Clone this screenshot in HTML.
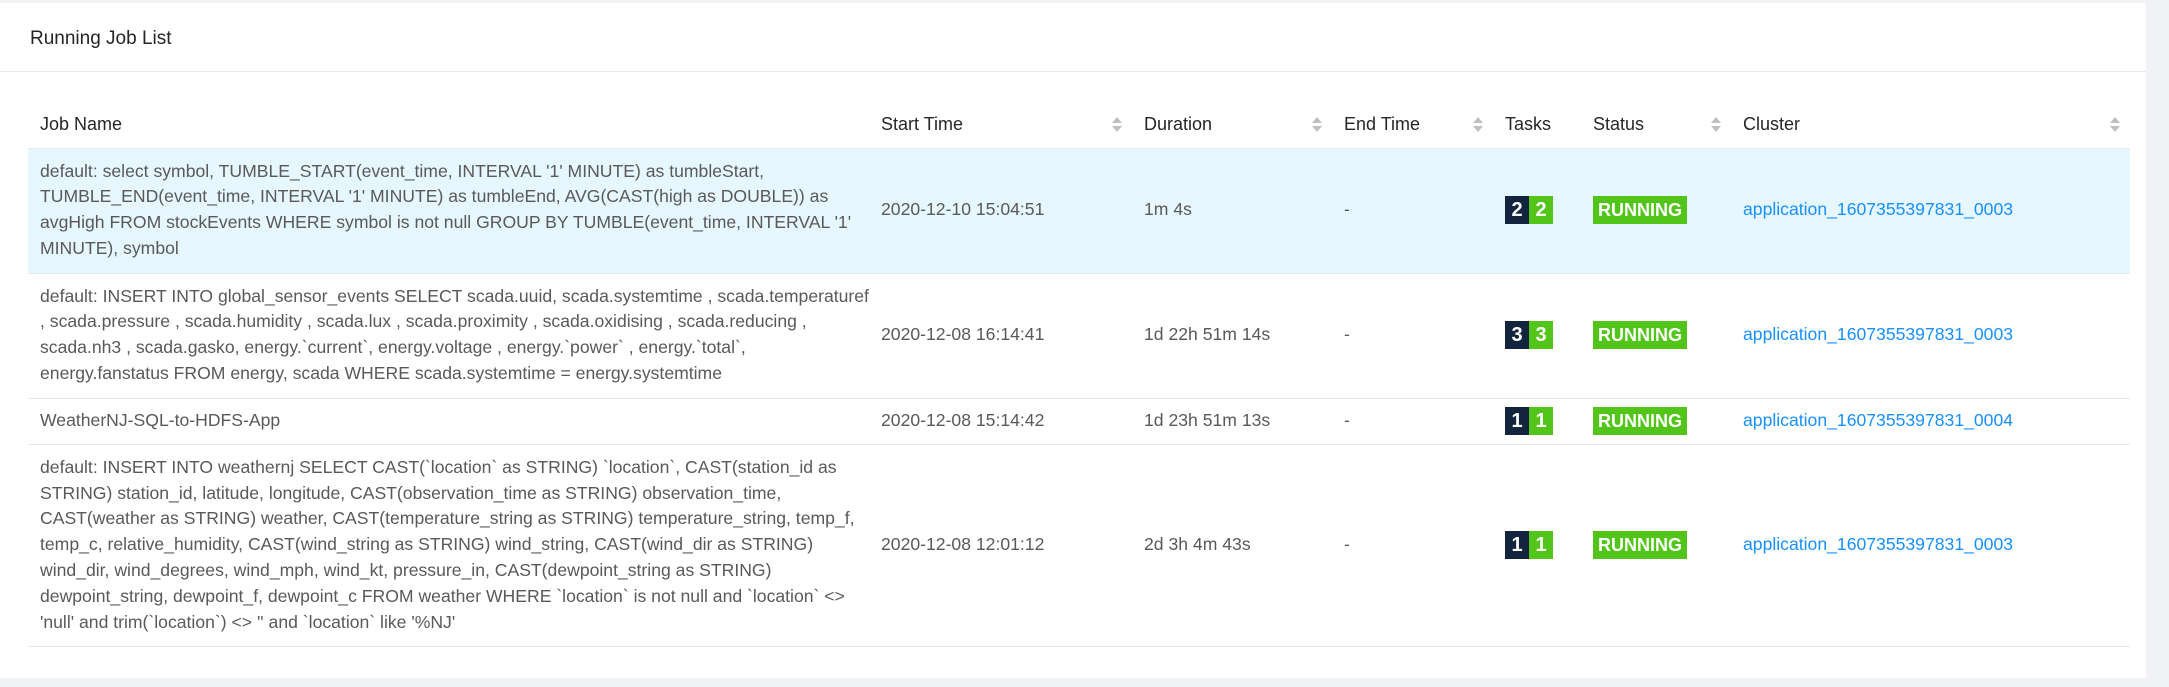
<!DOCTYPE html>
<html><head><meta charset="utf-8"><style>
*{box-sizing:border-box;margin:0;padding:0}
body{width:2169px;height:687px;background:#f0f2f5;font-family:"Liberation Sans",Arial,sans-serif;overflow:hidden;position:relative}
.card{position:absolute;left:0;top:3px;width:2146px;height:675px;background:#fff}
.title{height:69px;border-bottom:1px solid #e8e8e8;padding-left:30px;line-height:72px;font-size:19px;color:#262626}
table{position:absolute;left:28px;top:97px;width:2102px;border-collapse:collapse;table-layout:fixed;font-size:17.6px;color:#595959}
th{text-align:left;font-weight:normal;color:#262626;height:48px;padding:2px 12px 0;border-bottom:1px solid #e8e8e8;position:relative;white-space:nowrap;font-size:18px}
td{padding:10px 12px 11px;line-height:25.8px;border-bottom:1px solid #e8e8e8;vertical-align:middle;white-space:nowrap}
tr.short td{padding:8px 12px 9px}
tr.hl td{background:#e6f7ff}
.sort{position:absolute;right:10px;top:17px;width:10px;height:16px}
.sort:before,.sort:after{content:"";position:absolute;left:0;border-left:5px solid transparent;border-right:5px solid transparent}
.sort:before{top:0;border-bottom:6px solid #bfbfbf}
.sort:after{top:9px;border-top:6px solid #bfbfbf}
.b{display:inline-block;width:24px;height:28px;line-height:28px;text-align:center;color:#fff;font-weight:bold;font-size:20px;vertical-align:middle}
.d{background:#13253e}.g{background:#52c41a}
.run{display:inline-block;width:94px;height:28px;line-height:28px;text-align:center;background:#52c41a;color:#fff;font-weight:bold;font-size:18px;vertical-align:middle}
a{color:#1890ff;text-decoration:none}
</style></head><body>
<div class="card">
<div class="title">Running Job List</div>
<table>
<colgroup><col style="width:841px"><col style="width:263px"><col style="width:200px"><col style="width:161px"><col style="width:88px"><col style="width:150px"><col style="width:399px"></colgroup>
<tr><th>Job Name</th><th>Start Time<span class="sort"></span></th><th>Duration<span class="sort"></span></th><th>End Time<span class="sort"></span></th><th>Tasks</th><th>Status<span class="sort"></span></th><th>Cluster<span class="sort"></span></th></tr>
<tr class="hl"><td>default: select symbol, TUMBLE_START(event_time, INTERVAL '1' MINUTE) as tumbleStart,<br>TUMBLE_END(event_time, INTERVAL '1' MINUTE) as tumbleEnd, AVG(CAST(high as DOUBLE)) as<br>avgHigh FROM stockEvents WHERE symbol is not null GROUP BY TUMBLE(event_time, INTERVAL '1'<br>MINUTE), symbol</td><td>2020-12-10 15:04:51</td><td>1m 4s</td><td>-</td><td><span class="b d">2</span><span class="b g">2</span></td><td><span class="run">RUNNING</span></td><td><a>application_1607355397831_0003</a></td></tr>
<tr><td>default: INSERT INTO global_sensor_events SELECT scada.uuid, scada.systemtime , scada.temperaturef<br>, scada.pressure , scada.humidity , scada.lux , scada.proximity , scada.oxidising , scada.reducing ,<br>scada.nh3 , scada.gasko, energy.`current`, energy.voltage , energy.`power` , energy.`total`,<br>energy.fanstatus FROM energy, scada WHERE scada.systemtime = energy.systemtime</td><td>2020-12-08 16:14:41</td><td>1d 22h 51m 14s</td><td>-</td><td><span class="b d">3</span><span class="b g">3</span></td><td><span class="run">RUNNING</span></td><td><a>application_1607355397831_0003</a></td></tr>
<tr class="short"><td>WeatherNJ-SQL-to-HDFS-App</td><td>2020-12-08 15:14:42</td><td>1d 23h 51m 13s</td><td>-</td><td><span class="b d">1</span><span class="b g">1</span></td><td><span class="run">RUNNING</span></td><td><a>application_1607355397831_0004</a></td></tr>
<tr><td>default: INSERT INTO weathernj SELECT CAST(`location` as STRING) `location`, CAST(station_id as<br>STRING) station_id, latitude, longitude, CAST(observation_time as STRING) observation_time,<br>CAST(weather as STRING) weather, CAST(temperature_string as STRING) temperature_string, temp_f,<br>temp_c, relative_humidity, CAST(wind_string as STRING) wind_string, CAST(wind_dir as STRING)<br>wind_dir, wind_degrees, wind_mph, wind_kt, pressure_in, CAST(dewpoint_string as STRING)<br>dewpoint_string, dewpoint_f, dewpoint_c FROM weather WHERE `location` is not null and `location` &lt;&gt;<br>'null' and trim(`location`) &lt;&gt; '' and `location` like '%NJ'</td><td>2020-12-08 12:01:12</td><td>2d 3h 4m 43s</td><td>-</td><td><span class="b d">1</span><span class="b g">1</span></td><td><span class="run">RUNNING</span></td><td><a>application_1607355397831_0003</a></td></tr>
</table>
</div>
</body></html>
